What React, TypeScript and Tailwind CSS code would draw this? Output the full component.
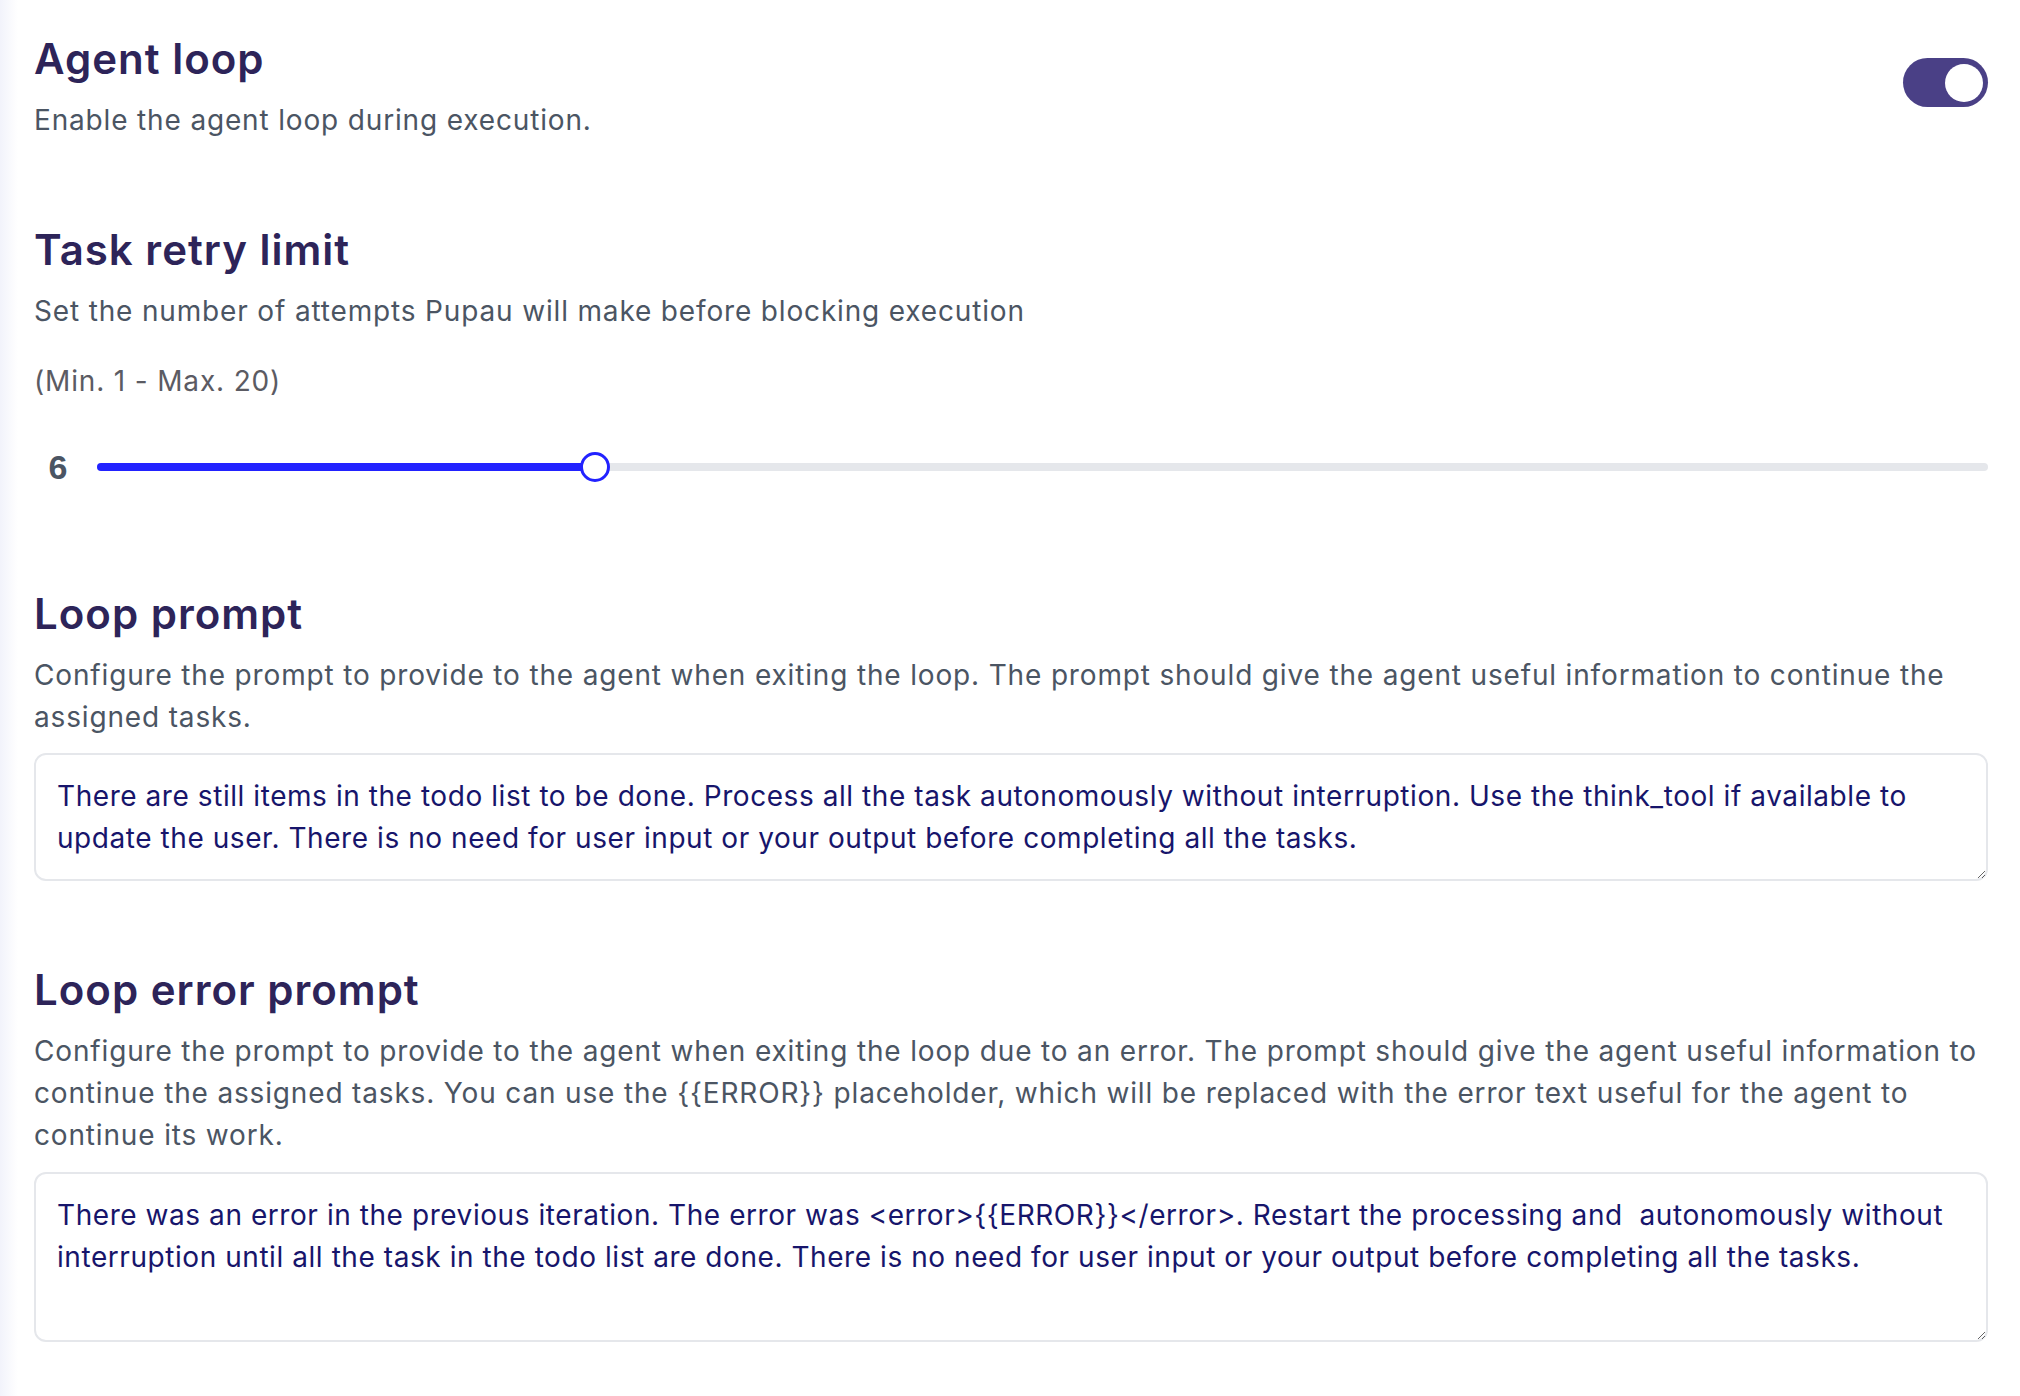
import React, { useState } from 'react';

const LOOP_PROMPT =
  "There are still items in the todo list to be done. Process all the task autonomously without interruption. Use the think_tool if available to update the user. There is no need for user input or your output before completing all the tasks.";

const LOOP_ERROR_PROMPT =
  "There was an error in the previous iteration. The error was <error>{{ERROR}}</error>. Restart the processing and  autonomously without interruption until all the task in the todo list are done. There is no need for user input or your output before completing all the tasks.";

const font = { fontFamily: 'Inter, "Noto Sans", sans-serif' };

const Toggle = ({ on, onChange }: { on: boolean; onChange: (v: boolean) => void }) => (
  <button
    onClick={() => onChange(!on)}
    className={`mt-[23px] flex h-[49px] w-[85px] shrink-0 items-center rounded-full px-[5px] ${
      on ? 'justify-end bg-[#4a4086]' : 'justify-start bg-gray-300'
    }`}
  >
    <span className="block h-[38px] w-[38px] rounded-full bg-white" />
  </button>
);

const RetrySlider = ({ value, min, max }: { value: number; min: number; max: number }) => {
  const pct = ((value - min) / (max - min)) * 100;
  return (
    <div className="flex h-8 items-center">
      <span
        className="w-12 text-center text-[34px] font-bold leading-8 text-[#4b5563]"
        style={{ fontFamily: '"Liberation Sans", Arial, sans-serif' }}
      >
        {value}
      </span>
      <div className="relative ml-[15px] h-2 flex-1 rounded-full bg-[#e5e7eb]">
        <div className="h-2 rounded-l-full bg-[#2222ff]" style={{ width: `${pct}%` }} />
        <div
          className="absolute top-1/2 h-[30px] w-[30px] -translate-x-1/2 -translate-y-1/2 rounded-full border-[3px] border-[#2222ff] bg-white"
          style={{ left: `${pct}%` }}
        />
      </div>
    </div>
  );
};

const headingCls = 'text-[42px] font-semibold leading-[48px] tracking-[0.024em] text-[#2d2459]';
const descCls = 'mt-4 text-[28px] leading-[42px] tracking-[0.03em] text-[#4b5563]';
const areaCls =
  'block w-full resize-y rounded-xl border-2 border-[#e5e7eb] pl-[21px] pr-3 py-[20px] text-[28px] leading-[42px] tracking-[0.02em] text-[#17156b] outline-none';

const App = () => {
  const [agentLoop, setAgentLoop] = useState(true);
  const [loopPrompt, setLoopPrompt] = useState(LOOP_PROMPT);
  const [errorPrompt, setErrorPrompt] = useState(LOOP_ERROR_PROMPT);

  return (
    <div className="flex min-h-screen bg-white" style={font}>
      <div className="w-[18px] shrink-0 bg-gradient-to-r from-[#f2f3fb] to-white" />
      <div className="flex-1 pl-4 pr-8 pt-[35px] pb-10">
        {/* Agent loop */}
        <div className="flex items-start justify-between">
          <div>
            <h2 className={headingCls}>Agent loop</h2>
            <p className={descCls}>Enable the agent loop during execution.</p>
          </div>
          <Toggle on={agentLoop} onChange={setAgentLoop} />
        </div>

        {/* Task retry limit */}
        <div className="mt-[85px]">
          <h2 className={headingCls}>Task retry limit</h2>
          <p className={descCls}>Set the number of attempts Pupau will make before blocking execution</p>
          <p className="mt-7 text-[28px] leading-[42px] tracking-[0.03em] text-[#5b5b63]">(Min. 1 - Max. 20)</p>
          <div className="mt-[49px]">
            <RetrySlider value={6} min={1} max={20} />
          </div>
        </div>

        {/* Loop prompt */}
        <div className="mt-[107px]">
          <h2 className={headingCls}>Loop prompt</h2>
          <p className={descCls}>
            Configure the prompt to provide to the agent when exiting the loop. The prompt should give the agent useful
            information to continue the assigned tasks.
          </p>
          <textarea
            value={loopPrompt}
            onChange={(e) => setLoopPrompt(e.target.value)}
            className={`mt-[15px] h-[128px] ${areaCls}`}
            style={font}
          />
        </div>

        {/* Loop error prompt */}
        <div className="mt-[85px]">
          <h2 className={headingCls}>Loop error prompt</h2>
          <p className={descCls}>
            Configure the prompt to provide to the agent when exiting the loop due to an error. The prompt should give the
            agent useful information to continue the assigned tasks. You can use the {'{{ERROR}}'} placeholder, which will
            be replaced with the error text useful for the agent to continue its work.
          </p>
          <textarea
            value={errorPrompt}
            onChange={(e) => setErrorPrompt(e.target.value)}
            className={`mt-4 h-[170px] ${areaCls}`}
            style={font}
          />
        </div>
      </div>
    </div>
  );
};

export default App;
